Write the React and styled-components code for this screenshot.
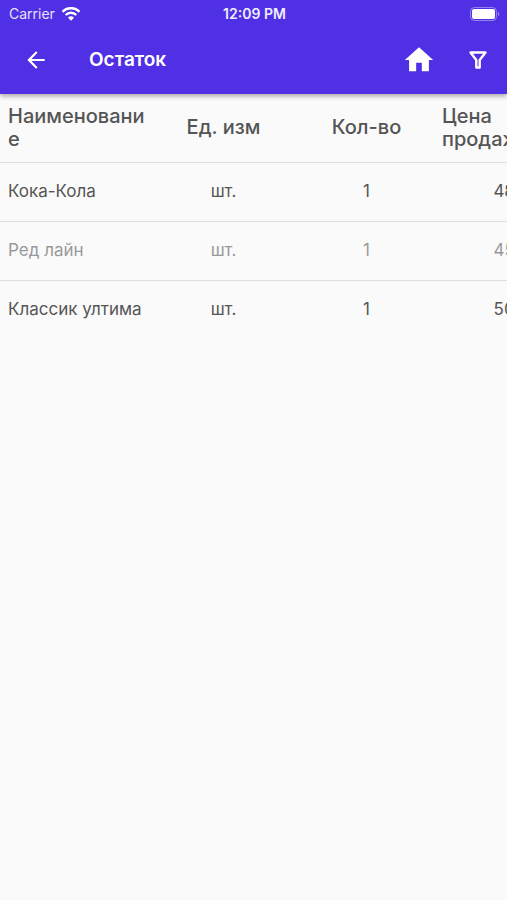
import React from "react";
import styled, { createGlobalStyle } from "styled-components";

const products = [
  { id: 1, name: "Кока-Кола", unit: "шт.", count: 1, price: 480 },
  { id: 2, name: "Ред лайн", unit: "шт.", count: 1, price: 450, muted: true },
  { id: 3, name: "Классик ултима", unit: "шт.", count: 1, price: 500 },
];

export default function App() {
  return (
    <Page>
      <GlobalStyle />
      <Header>
        <StatusBar>
          <Carrier>
            Carrier
            <WifiIcon />
          </Carrier>
          <Clock>12:09 PM</Clock>
          <BatteryIcon />
        </StatusBar>
        <AppBar>
          <IconButton type="button" aria-label="Назад">
            <BackIcon />
          </IconButton>
          <Title>Остаток</Title>
          <IconButton type="button" aria-label="Главная">
            <HomeIcon />
          </IconButton>
          <IconButton type="button" aria-label="Фильтр">
            <FilterIcon />
          </IconButton>
        </AppBar>
      </Header>

      {/* the table is wider than a phone and scrolls sideways */}
      <TableScroll>
        <StockTable>
          <colgroup>
            <NameCol />
            <ValueCol span="3" />
          </colgroup>
          <thead>
            <tr>
              <HeadCell scope="col">Наименование</HeadCell>
              <HeadCell scope="col" $align="center">
                Ед. изм
              </HeadCell>
              <HeadCell scope="col" $align="center">
                Кол-во
              </HeadCell>
              <HeadCell scope="col">Цена продажи</HeadCell>
            </tr>
          </thead>
          <tbody>
            {products.map((item) => (
              <Row key={item.id} $muted={item.muted}>
                <Cell>{item.name}</Cell>
                <Cell $align="center">{item.unit}</Cell>
                <Cell $align="center">{item.count}</Cell>
                <Cell $align="center">{item.price}</Cell>
              </Row>
            ))}
          </tbody>
        </StockTable>
      </TableScroll>
    </Page>
  );
}

function WifiIcon() {
  return (
    <svg width="20" height="14" viewBox="0 0 20 14" fill="none">
      <path d="M1.6 4.8a11.8 11.8 0 0 1 16.800 0" stroke="#fff" strokeWidth="2.6" />
      <path d="M4.700 8a7.400 7.400 0 0 1 10.600 0" stroke="#fff" strokeWidth="2.4" />
      <path d="M10 13.800 7 10.700a4.300 4.300 0 0 1 6 0z" fill="#fff" />
    </svg>
  );
}

function BatteryIcon() {
  return (
    <svg width="30" height="14" viewBox="0 0 30 14" fill="none">
      <rect
        x="0.5"
        y="0.5"
        width="26"
        height="13"
        rx="4"
        stroke="#fff"
        strokeOpacity="0.4"
      />
      <rect x="2" y="2" width="23" height="10" rx="2" fill="#fff" />
      <path d="M28 5v4a2.200 2.200 0 0 0 0-4z" fill="#fff" fillOpacity="0.5" />
    </svg>
  );
}

function BackIcon() {
  return (
    <svg width="26" height="26" viewBox="0 0 24 24" fill="#fff">
      <path d="M20 11H7.830l5.590-5.590L12 4l-8 8 8 8 1.410-1.410L7.830 13H20v-2z" />
    </svg>
  );
}

function HomeIcon() {
  return (
    <svg width="34" height="34" viewBox="0 0 24 24" fill="#fff">
      <path d="M10 20v-6h4v6h5v-8h3L12 3 2 12h3v8z" />
    </svg>
  );
}

function FilterIcon() {
  return (
    <svg width="26" height="26" viewBox="0 0 26 26" fill="none">
      <path
        d="M5.500 5.500h15l-5.800 7.500v7.500h-3.400v-7.500z"
        stroke="#fff"
        strokeWidth="2.400"
        strokeLinejoin="round"
      />
    </svg>
  );
}

const GlobalStyle = createGlobalStyle`
  * {
    box-sizing: border-box;
  }
  body {
    margin: 0;
    background-color: #fafafa;
    font-family: Inter, "Liberation Sans", sans-serif;
  }
`;

const Page = styled.div`
  min-height: 100vh;
  background-color: #fafafa;
`;

const Header = styled.header`
  position: relative;
  color: #fff;
  background-color: #5030e5;
  box-shadow: 0 2px 5px rgba(0, 0, 0, 0.35);
`;

const StatusBar = styled.div`
  display: grid;
  grid-template-columns: 1fr auto 1fr;
  align-items: center;
  height: 27px;
  padding: 0 7px 0 9px;
  font-size: 14px;
  line-height: 17px;
  svg:last-child {
    justify-self: end;
  }
`;

const Carrier = styled.div`
  display: flex;
  align-items: center;
  gap: 6px;
  color: #e6e0fb;
`;

const Clock = styled.div`
  font-weight: 600;
  color: #f0edfd;
`;

const AppBar = styled.div`
  display: flex;
  align-items: center;
  height: 67px;
  padding: 0 0 2px 6px;
`;

const IconButton = styled.button`
  display: flex;
  align-items: center;
  justify-content: center;
  width: 59px;
  height: 59px;
  padding: 0;
  border: none;
  background: none;
  cursor: pointer;
`;

const Title = styled.h1`
  flex: 1;
  margin: 0;
  padding-left: 24px;
  font-size: 19px;
  line-height: 23px;
  font-weight: 600;
`;

const TableScroll = styled.div`
  overflow-x: auto;
  scrollbar-width: none;
`;

const StockTable = styled.table`
  width: 581px;
  min-width: 100%;
  table-layout: fixed;
  border-collapse: collapse;
  color: #555;
`;

const NameCol = styled.col`
  width: 152px;
`;

const ValueCol = styled.col`
  width: 143px;
`;

const HeadCell = styled.th`
  height: 68px;
  padding: 0 4px;
  font-size: 20px;
  line-height: 23px;
  font-weight: 500;
  text-align: ${({ $align }) => $align || "left"};
  overflow-wrap: anywhere;
  &:first-child {
    padding-left: 8px;
  }
`;

const Row = styled.tr`
  border-top: 1px solid #dedede;
  color: ${({ $muted }) => ($muted ? "#999" : "#555")};
`;

const Cell = styled.td`
  height: 59px;
  padding: 0 4px;
  font-size: 17px;
  line-height: 21px;
  text-align: ${({ $align }) => $align || "left"};
  &:first-child {
    padding-left: 8px;
  }
`;
